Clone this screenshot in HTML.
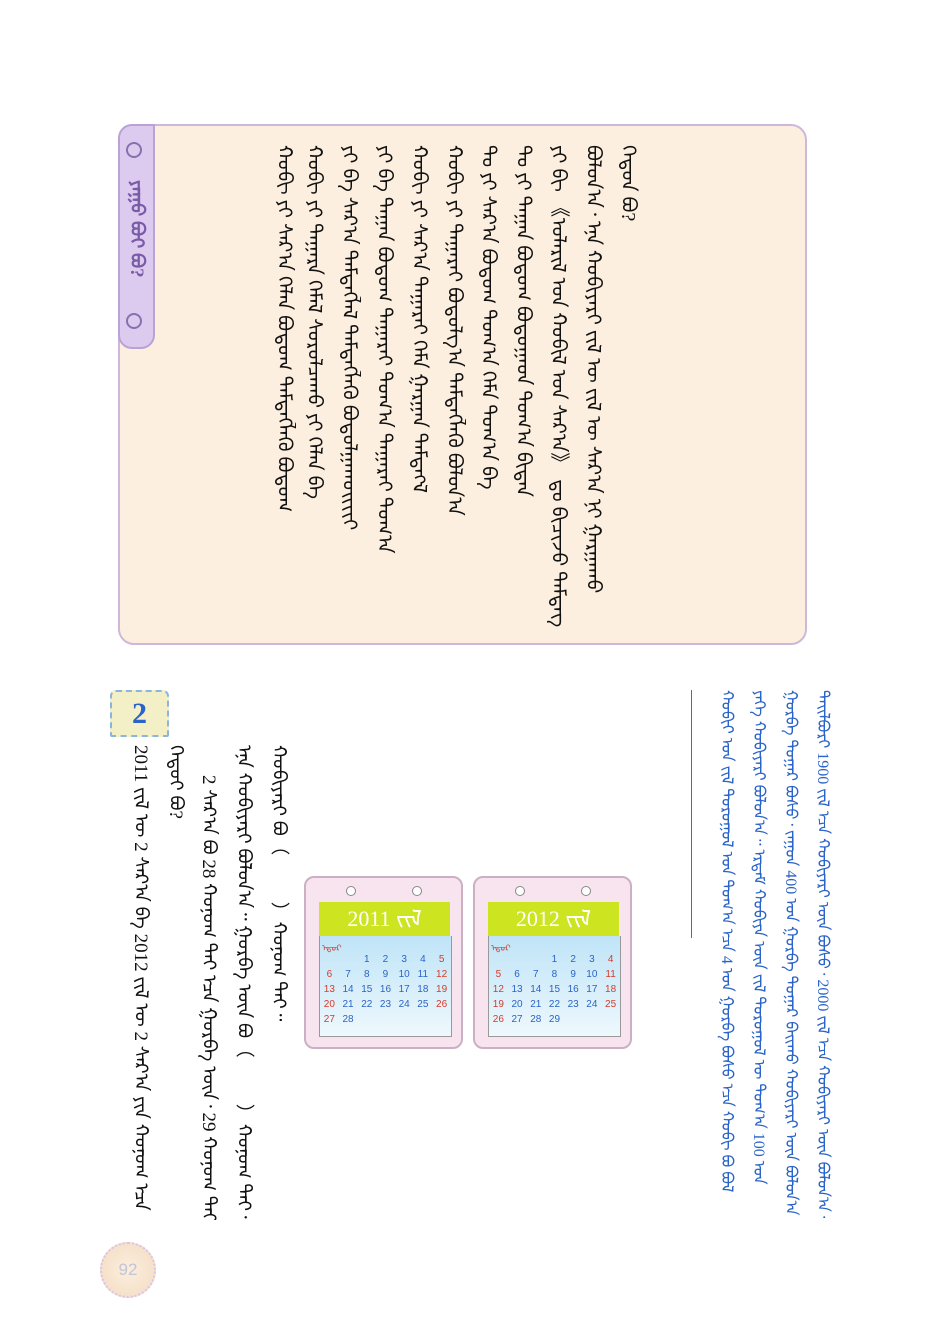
<!DOCTYPE html>
<html><head><meta charset="utf-8"><style>
body{margin:0;width:940px;height:1337px;background:#fff;position:relative;overflow:hidden;font-family:"Liberation Serif","DejaVu Sans",serif}
.c{position:absolute;writing-mode:vertical-rl;text-orientation:mixed;font-size:20px;line-height:24px;white-space:nowrap;color:#111;letter-spacing:1px;overflow:hidden}
.b{color:#2a64c8;font-size:16px;line-height:20px;height:528px}
.box{position:absolute;left:118px;top:124px;width:685px;height:517px;background:#fcefdf;border:2px solid #cdb8dc;border-radius:16px}
.tab{position:absolute;left:118px;top:124px;width:33px;height:221px;background:#dccbef;border:2px solid #b9a2d6;border-radius:14px 0 14px 14px}
.ring{position:absolute;width:12px;height:12px;border:2px solid #8a6fb0;border-radius:50%;left:8px}
.cal{position:absolute;width:155px;height:169px;background:#f7e4ef;border:2px solid #cbb0c4;border-radius:10px}
.cal .h{position:absolute;left:13px;top:24px;width:131px;height:34px;background:#cde521;color:#fff;font-size:22px;text-align:center;line-height:34px}
.cal .g{position:absolute;left:13px;top:58px;width:131px;height:100px;background:linear-gradient(#bfe4f7,#eef8fd);border:1px solid #999;border-top:none}
.cal .o{position:absolute;top:8px;width:8px;height:8px;border:1.5px solid #888;border-radius:50%;background:#fff}
.cal table{position:absolute;left:0;top:16px;width:131px;border-collapse:collapse;font:10px "Liberation Sans",sans-serif;color:#2a64c8;text-align:center}
.cal td{padding:0;height:15px}
.cal td.r{color:#d83a2a}
.cal .wd{position:absolute;top:2px;left:2px;font-size:9px;color:#c43;letter-spacing:8px}
</style></head><body>
<div class="box"></div>
<div class="tab"></div>
<div class="ring" style="left:126px;top:142px"></div>
<div class="ring" style="left:126px;top:313px"></div>
<div class="c" style="left:124px;top:180px;color:#7a5ba8;font-size:19px;font-weight:bold">ᠶᠠᠭᠤ ᠪᠤᠢ ᠪᠤ?</div>

<div class="c" style="left:616px;top:145px">ᠬᠡᠳᠦᠨ ᠪᠤ?</div>
<div class="c" style="left:581px;top:145px">ᠪᠣᠯᠣᠨ᠎ᠠ᠂ ᠡᠨᠡ ᠬᠤᠪᠢᠶᠠᠷᠢ ᠵᠢᠯ ᠦ ᠵᠢᠯ ᠦ ᠰᠠᠷ᠎ᠠ ᠨᠢ ᠭᠠᠷᠭᠠᠬᠤ</div>
<div class="c" style="left:546px;top:145px">ᠶᠢ ᠪᠢ 《ᠤᠯᠠᠷᠢᠯ ᠤᠨ ᠬᠤᠪᠢᠯ ᠤᠨ ᠰᠠᠷ᠎ᠠ》 ᠳᠤ ᠪᠢᠴᠢᠵᠦ ᠲᠡᠮᠳᠡᠭ</div>
<div class="c" style="left:511px;top:145px">ᠲᠣ ᠶᠢ ᠳᠠᠭᠠᠨ ᠪᠤᠳᠤᠭ ᠪᠣᠳᠣᠭᠠᠳ ᠲᠣᠭ᠎ᠠ ᠪᠢᠳᠡᠨ</div>
<div class="c" style="left:476px;top:145px">ᠲᠣ ᠶᠢ ᠰᠠᠷ᠎ᠠ ᠪᠤᠳᠤᠭ ᠲᠣᠭ᠎ᠠ ᠬᠡᠮᠡ ᠲᠣᠭ᠎ᠠ ᠪᠠ</div>
<div class="c" style="left:442px;top:145px">ᠬᠣᠪᠢ ᠶᠢ ᠳᠠᠭᠠᠷᠠᠢ ᠪᠣᠳᠣᠯᠭ᠎ᠠ ᠲᠡᠮᠳᠡᠭᠯᠡᠬᠦ ᠪᠣᠯᠤᠨ᠎ᠠ</div>
<div class="c" style="left:407px;top:145px">ᠬᠣᠪᠢ ᠶᠢ ᠰᠠᠷ᠎ᠠ ᠳᠠᠭᠠᠷᠠᠢ ᠬᠡᠮᠡ ᠭᠠᠷᠭᠠᠨ ᠲᠡᠮᠳᠡᠭᠯ</div>
<div class="c" style="left:372px;top:145px">ᠶᠢ ᠪᠠ ᠳᠠᠭᠠᠨ ᠪᠤᠳᠤᠭ ᠳᠠᠭᠠᠷᠠᠢ ᠲᠣᠭ᠎ᠠ ᠳᠠᠭᠠᠷᠠᠢ ᠲᠣᠭ᠎ᠠ</div>
<div class="c" style="left:337px;top:145px">ᠶᠢ ᠪᠠ ᠰᠠᠷ᠎ᠠ ᠲᠡᠮᠳᠡᠭᠯᠡᠯ ᠲᠡᠮᠳᠡᠭᠯᠡᠬᠦ ᠪᠣᠳᠣᠯᠭᠠᠬᠤᠢᠢᠢᠢ</div>
<div class="c" style="left:302px;top:145px">ᠬᠣᠪᠢ ᠶᠢ ᠳᠠᠭᠠᠷᠠ ᠬᠡᠮᠡᠯ ᠰᠤᠷᠤᠯᠴᠠᠬᠤ ᠶᠢ ᠬᠡᠯᠡᠨ ᠪᠠ</div>
<div class="c" style="left:272px;top:145px">ᠬᠣᠪᠢ ᠶᠢ ᠰᠠᠷ᠎ᠠ ᠬᠡᠯᠡᠨ ᠪᠤᠳᠤᠭ ᠲᠡᠮᠳᠡᠭᠯᠡᠬᠦ ᠪᠣᠳᠣᠭ</div>

<div class="c b" style="left:812px;top:690px">ᠲᠠᠢᠯᠪᠤᠷᠢ 1900 ᠵᠢᠯ ᠡᠴᠡ ᠬᠤᠪᠢᠶᠠᠷᠢ ᠦᠨ ᠪᠤᠰᠤ᠂ 2000 ᠵᠢᠯ ᠡᠴᠡ ᠬᠤᠪᠢᠶᠠᠷᠢ ᠦᠨ ᠪᠣᠯᠤᠨ᠎ᠠ᠃</div>
<div class="c b" style="left:780px;top:690px">ᠭᠤᠷᠪᠠ ᠳᠤᠭᠠᠷ ᠪᠤᠰᠤ᠂ ᠵᠠᠭᠤᠨ 400 ᠤᠨ ᠭᠤᠷᠪᠠ ᠳᠤᠭᠠᠷ ᠪᠠᠢᠬᠤ ᠬᠤᠪᠢᠶᠠᠷᠢ ᠦᠨ ᠪᠣᠯᠤᠨ᠎ᠠ᠃</div>
<div class="c b" style="left:748px;top:690px">ᠶᠡᠬᠡ ᠬᠤᠪᠢᠶᠠᠷᠢ ᠪᠣᠯᠤᠨ᠎ᠠ᠃ ᠡᠷᠳᠡᠮ ᠬᠤᠪᠢᠶᠠ ᠦᠨ ᠵᠢᠯ ᠳᠣᠷᠤᠭᠤᠯ ᠦ ᠲᠣᠭ᠎ᠠ 100 ᠤᠨ</div>
<div class="c b" style="left:716px;top:690px">ᠬᠤᠪᠢᠶ ᠤᠨ ᠵᠢᠯ ᠳᠣᠷᠤᠭᠤᠯ ᠤᠨ ᠲᠣᠭ᠎ᠠ ᠡᠴᠡ 4 ᠤᠨ ᠭᠤᠷᠪᠠ ᠪᠤᠰᠤ ᠡᠴᠡ ᠬᠤᠪᠢ ᠪᠤ ᠪᠣᠯ</div>
<div style="position:absolute;left:691px;top:690px;width:1px;height:248px;background:#3a6fcc"></div>

<div class="cal" style="left:473px;top:876px">
<div class="o" style="left:40px"></div><div class="o" style="left:106px"></div>
<div class="h">2012 ᠵᠢᠯ</div>
<div class="g"><div class="wd">ᠡᠳᠦᠷ</div><table>
<tr><td></td><td></td><td></td><td>1</td><td>2</td><td>3</td><td class="r">4</td></tr>
<tr><td class="r">5</td><td>6</td><td>7</td><td>8</td><td>9</td><td>10</td><td class="r">11</td></tr>
<tr><td class="r">12</td><td>13</td><td>14</td><td>15</td><td>16</td><td>17</td><td class="r">18</td></tr>
<tr><td class="r">19</td><td>20</td><td>21</td><td>22</td><td>23</td><td>24</td><td class="r">25</td></tr>
<tr><td class="r">26</td><td>27</td><td>28</td><td>29</td><td></td><td></td><td></td></tr></table></div></div>

<div class="cal" style="left:304px;top:876px">
<div class="o" style="left:40px"></div><div class="o" style="left:106px"></div>
<div class="h">2011 ᠵᠢᠯ</div>
<div class="g"><div class="wd">ᠡᠳᠦᠷ</div><table>
<tr><td></td><td></td><td>1</td><td>2</td><td>3</td><td>4</td><td class="r">5</td></tr>
<tr><td class="r">6</td><td>7</td><td>8</td><td>9</td><td>10</td><td>11</td><td class="r">12</td></tr>
<tr><td class="r">13</td><td>14</td><td>15</td><td>16</td><td>17</td><td>18</td><td class="r">19</td></tr>
<tr><td class="r">20</td><td>21</td><td>22</td><td>23</td><td>24</td><td>25</td><td class="r">26</td></tr>
<tr><td class="r">27</td><td>28</td><td></td><td></td><td></td><td></td><td></td></tr></table></div></div>

<div class="c" style="left:266px;top:745px;font-size:19px">ᠬᠤᠪᠢᠶᠠᠷᠢ ᠪᠤ（　　 ）ᠬᠤᠨᠤᠭ ᠲᠠᠢ᠃</div>
<div class="c" style="left:231px;top:745px;font-size:19px;height:475px">ᠡᠨᠡ ᠬᠤᠪᠢᠶᠠᠷᠢ ᠪᠣᠯᠤᠨ᠎ᠠ᠃ ᠭᠤᠷᠪᠠ ᠦᠨ ᠪᠤ（　　 ）ᠬᠤᠨᠤᠭ ᠲᠠᠢ᠂</div>
<div class="c" style="left:196px;top:775px;font-size:19px;height:445px">2 ᠰᠠᠷ᠎ᠠ ᠪᠤ 28 ᠬᠤᠨᠤᠭ ᠲᠠᠢ ᠡᠴᠡ ᠭᠤᠷᠪᠠ ᠦᠨ᠂ 29 ᠬᠤᠨᠤᠭ ᠲᠠᠢ</div>
<div class="c" style="left:163px;top:745px;font-size:19px">ᠬᠡᠳᠦᠢ ᠪᠤ?</div>
<div class="c" style="left:128px;top:745px;font-size:19px;height:475px">2011 ᠵᠢᠯ ᠦ 2 ᠰᠠᠷ᠎ᠠ ᠪᠠ 2012 ᠵᠢᠯ ᠦ 2 ᠰᠠᠷ᠎ᠠ ᠶᠢᠨ ᠬᠤᠨᠤᠭ ᠡᠴᠡ</div>

<div style="position:absolute;left:110px;top:690px;width:55px;height:43px;background:#f3f0c8;border:2px dashed #8ab4e4;border-radius:6px 6px 2px 2px;font:bold 30px 'Liberation Serif',serif;color:#2a64c8;text-align:center;line-height:43px">2</div>
<div style="position:absolute;left:100px;top:1242px;width:52px;height:52px;border-radius:50%;background:radial-gradient(#fbeedc,#f4dcc4);border:2px dotted #d8c4e4;font:17px 'Liberation Sans',sans-serif;color:#c4c4d8;text-align:center;line-height:52px">92</div>
</body></html>
